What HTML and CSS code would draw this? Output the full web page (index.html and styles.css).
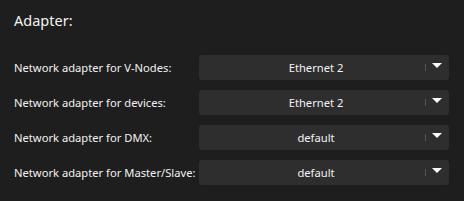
FILE: index.html
```html
<!DOCTYPE html>
<html lang="en">

<head>
  <meta charset="UTF-8">
  <title>Adapter</title>
  <link rel="stylesheet" href="styles.css">
</head>

<body>

  <div class="panel">
    <h2 class="panel-title">Adapter:</h2>

    <div class="rows">
      <div class="row">
        <span class="row-label">Network adapter for V-Nodes:</span>
        <div class="select">
          <span class="select-value">Ethernet 2</span>
          <span class="select-divider"></span>
          <span class="select-arrow"></span>
        </div>
      </div>

      <div class="row">
        <span class="row-label">Network adapter for devices:</span>
        <div class="select">
          <span class="select-value">Ethernet 2</span>
          <span class="select-divider"></span>
          <span class="select-arrow"></span>
        </div>
      </div>

      <div class="row">
        <span class="row-label">Network adapter for DMX:</span>
        <div class="select">
          <span class="select-value">default</span>
          <span class="select-divider"></span>
          <span class="select-arrow"></span>
        </div>
      </div>

      <div class="row">
        <span class="row-label">Network adapter for Master/Slave:</span>
        <div class="select">
          <span class="select-value">default</span>
          <span class="select-divider"></span>
          <span class="select-arrow"></span>
        </div>
      </div>
    </div>
  </div>

</body>

</html>
```

FILE: styles.css
```css
body {
  margin: 0;
  padding: 0;
  background-color: #1e1e1e;
  color: #f2f2f2;
  font-family: 'Noto Sans', 'Open Sans', sans-serif;
}

.panel {
  padding: 10px 15px 0 14px;
}

.panel-title {
  margin: 0;
  font-size: 14.5px;
  font-weight: normal;
  line-height: 20px;
}

.rows {
  margin-top: 25px;
  display: flex;
  flex-direction: column;
  gap: 10px;
}

.row {
  display: flex;
  align-items: center;
  height: 25px;
}

.row-label {
  width: 185px;
  flex-shrink: 0;
  font-size: 11.2px;
  white-space: nowrap;
}

.select {
  width: 250px;
  height: 25px;
  display: flex;
  background-color: #2e2e2e;
  border-radius: 3px;
}

.select-value {
  flex: 1;
  padding-left: 8px;
  font-size: 11.2px;
  line-height: 25px;
  text-align: center;
}

.select-divider {
  width: 1px;
  height: 7px;
  margin-top: 9px;
  background-color: #555;
}

.select-arrow {
  width: 0;
  height: 0;
  margin: 8px 7px 0 6px;
  border-left: 5.5px solid transparent;
  border-right: 5.5px solid transparent;
  border-top: 5px solid #fff;
}
```
